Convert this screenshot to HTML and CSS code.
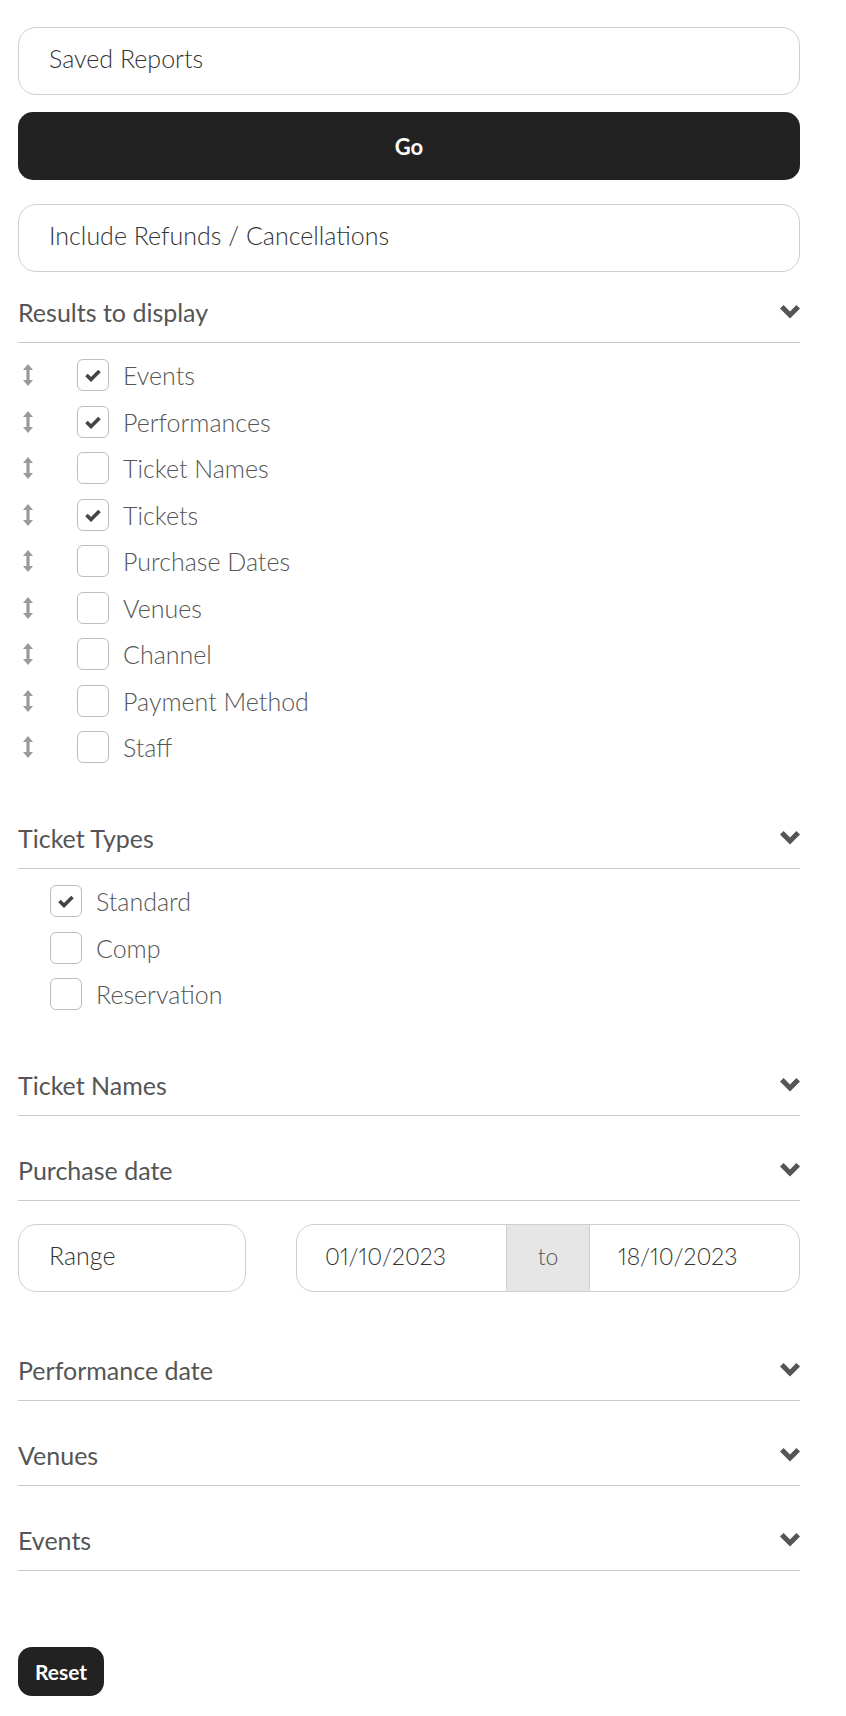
FILE: index.html
```html
<!DOCTYPE html>
<html lang="en">
<head>
    <meta charset="UTF-8">
    <meta name="viewport" content="width=device-width, initial-scale=1.0">
    <title>Report Filters</title>
    <link rel="stylesheet" href="styles.css">
</head>
<body>
    <div class="filters">
        <div class="field">Saved Reports</div>
        <button class="btn-go">Go</button>
        <div class="field field-gap">Include Refunds / Cancellations</div>

        <!-- Results to display -->
        <section class="panel">
            <div class="panel-head first">
                <h2>Results to display</h2>
                <svg class="chevron" viewBox="0 0 20 14"><path d="M0 3.6 L3.6 0 L10 6.4 L16.4 0 L20 3.6 L10 13.6 Z"/></svg>
            </div>
            <ul class="opt-list sortable">
                <li><svg class="drag" viewBox="0 0 10 22"><path d="M5 0 L10 6 L6.6 6 L6.6 16 L10 16 L5 22 L0 16 L3.4 16 L3.4 6 L0 6 Z"/></svg><span class="box on"><svg viewBox="0 0 18 14"><polyline points="2.5,7 7,11.5 15.5,3"/></svg></span>Events</li>
                <li><svg class="drag" viewBox="0 0 10 22"><path d="M5 0 L10 6 L6.6 6 L6.6 16 L10 16 L5 22 L0 16 L3.4 16 L3.4 6 L0 6 Z"/></svg><span class="box on"><svg viewBox="0 0 18 14"><polyline points="2.5,7 7,11.5 15.5,3"/></svg></span>Performances</li>
                <li><svg class="drag" viewBox="0 0 10 22"><path d="M5 0 L10 6 L6.6 6 L6.6 16 L10 16 L5 22 L0 16 L3.4 16 L3.4 6 L0 6 Z"/></svg><span class="box"></span>Ticket Names</li>
                <li><svg class="drag" viewBox="0 0 10 22"><path d="M5 0 L10 6 L6.6 6 L6.6 16 L10 16 L5 22 L0 16 L3.4 16 L3.4 6 L0 6 Z"/></svg><span class="box on"><svg viewBox="0 0 18 14"><polyline points="2.5,7 7,11.5 15.5,3"/></svg></span>Tickets</li>
                <li><svg class="drag" viewBox="0 0 10 22"><path d="M5 0 L10 6 L6.6 6 L6.6 16 L10 16 L5 22 L0 16 L3.4 16 L3.4 6 L0 6 Z"/></svg><span class="box"></span>Purchase Dates</li>
                <li><svg class="drag" viewBox="0 0 10 22"><path d="M5 0 L10 6 L6.6 6 L6.6 16 L10 16 L5 22 L0 16 L3.4 16 L3.4 6 L0 6 Z"/></svg><span class="box"></span>Venues</li>
                <li><svg class="drag" viewBox="0 0 10 22"><path d="M5 0 L10 6 L6.6 6 L6.6 16 L10 16 L5 22 L0 16 L3.4 16 L3.4 6 L0 6 Z"/></svg><span class="box"></span>Channel</li>
                <li><svg class="drag" viewBox="0 0 10 22"><path d="M5 0 L10 6 L6.6 6 L6.6 16 L10 16 L5 22 L0 16 L3.4 16 L3.4 6 L0 6 Z"/></svg><span class="box"></span>Payment Method</li>
                <li><svg class="drag" viewBox="0 0 10 22"><path d="M5 0 L10 6 L6.6 6 L6.6 16 L10 16 L5 22 L0 16 L3.4 16 L3.4 6 L0 6 Z"/></svg><span class="box"></span>Staff</li>
            </ul>
        </section>

        <!-- Ticket Types -->
        <section class="panel">
            <div class="panel-head">
                <h2>Ticket Types</h2>
                <svg class="chevron" viewBox="0 0 20 14"><path d="M0 3.6 L3.6 0 L10 6.4 L16.4 0 L20 3.6 L10 13.6 Z"/></svg>
            </div>
            <ul class="opt-list indented">
                <li><span class="box on"><svg viewBox="0 0 18 14"><polyline points="2.5,7 7,11.5 15.5,3"/></svg></span>Standard</li>
                <li><span class="box"></span>Comp</li>
                <li><span class="box"></span>Reservation</li>
            </ul>
        </section>

        <section class="panel">
            <div class="panel-head">
                <h2>Ticket Names</h2>
                <svg class="chevron" viewBox="0 0 20 14"><path d="M0 3.6 L3.6 0 L10 6.4 L16.4 0 L20 3.6 L10 13.6 Z"/></svg>
            </div>
        </section>

        <!-- Purchase date -->
        <section class="panel">
            <div class="panel-head">
                <h2>Purchase date</h2>
                <svg class="chevron" viewBox="0 0 20 14"><path d="M0 3.6 L3.6 0 L10 6.4 L16.4 0 L20 3.6 L10 13.6 Z"/></svg>
            </div>
            <div class="date-row">
                <div class="field">Range</div>
                <div class="date-group">
                    <div class="date-input">01/10/2023</div>
                    <div class="date-to">to</div>
                    <div class="date-input">18/10/2023</div>
                </div>
            </div>
        </section>

        <section class="panel">
            <div class="panel-head">
                <h2>Performance date</h2>
                <svg class="chevron" viewBox="0 0 20 14"><path d="M0 3.6 L3.6 0 L10 6.4 L16.4 0 L20 3.6 L10 13.6 Z"/></svg>
            </div>
        </section>

        <section class="panel">
            <div class="panel-head">
                <h2>Venues</h2>
                <svg class="chevron" viewBox="0 0 20 14"><path d="M0 3.6 L3.6 0 L10 6.4 L16.4 0 L20 3.6 L10 13.6 Z"/></svg>
            </div>
        </section>

        <section class="panel">
            <div class="panel-head">
                <h2>Events</h2>
                <svg class="chevron" viewBox="0 0 20 14"><path d="M0 3.6 L3.6 0 L10 6.4 L16.4 0 L20 3.6 L10 13.6 Z"/></svg>
            </div>
        </section>

        <button class="btn-reset">Reset</button>
    </div>
</body>
</html>
```

FILE: styles.css
```css
body {
    font-family: Lato, 'Open Sans', sans-serif;
    margin: 0;
    padding: 0;
    background: #fff;
    color: #333;
}
.filters {
    width: 782px;
    padding: 27px 0 0 18px;
}
.field {
    box-sizing: border-box;
    height: 68px;
    display: flex;
    align-items: center;
    padding: 0 30px 6px;
    border: 1px solid #cfcfcf;
    border-radius: 18px;
    font-size: 25px;
    font-weight: 300;
    color: #333;
}
.field-gap {
    margin-top: 24px;
}
.btn-go {
    display: block;
    width: 100%;
    height: 68px;
    margin-top: 17px;
    border: none;
    border-radius: 15px;
    background-color: #222;
    color: #fff;
    font-family: Lato, sans-serif;
    font-size: 22px;
    font-weight: bold;
    cursor: pointer;
}
.panel-head {
    box-sizing: border-box;
    display: flex;
    align-items: center;
    justify-content: space-between;
    height: 57px;
    padding-bottom: 5px;
    margin-top: 28px;
    border-bottom: 1px solid #c8c8c8;
}
.panel-head.first {
    margin-top: 14px;
}
.panel-head h2 {
    margin: 0;
    font-size: 25px;
    font-weight: normal;
    color: #555;
}
.chevron {
    width: 20px;
    height: 14px;
    fill: #555;
}
.opt-list {
    list-style: none;
    margin: 0;
    padding: 16px 0 21px;
    display: flex;
    flex-direction: column;
    gap: 14.5px;
}
.opt-list li {
    display: flex;
    align-items: center;
    height: 32px;
    font-size: 25px;
    font-weight: 300;
    color: #555;
}
.opt-list.indented {
    padding-left: 32px;
}
.drag {
    width: 10px;
    height: 22px;
    margin: 0 44px 0 5px;
    fill: #9a9a9a;
}
.box {
    box-sizing: border-box;
    width: 32px;
    height: 32px;
    margin-right: 14px;
    border: 1px solid #bdbdbd;
    border-radius: 6px;
    display: flex;
    align-items: center;
    justify-content: center;
}
.box svg {
    width: 18px;
    height: 14px;
    fill: none;
    stroke: #444;
    stroke-width: 3.6;
}
.date-row {
    display: grid;
    grid-template-columns: 228px 1fr;
    gap: 50px;
    padding: 23px 0 24px;
}
.date-group {
    display: flex;
    height: 68px;
    box-sizing: border-box;
    border: 1px solid #cfcfcf;
    border-radius: 18px;
    overflow: hidden;
    font-size: 23px;
    font-weight: 300;
    font-variant-numeric: proportional-nums;
    color: #333;
}
.date-input {
    flex: 1;
    display: flex;
    align-items: center;
    padding: 0 0 4px 28px;
}
.date-to {
    width: 82px;
    display: flex;
    align-items: center;
    justify-content: center;
    padding-bottom: 4px;
    background-color: #e6e6e6;
    border-left: 1px solid #cfcfcf;
    border-right: 1px solid #cfcfcf;
    color: #555;
}
.btn-reset {
    display: block;
    margin-top: 76px;
    width: 86px;
    height: 49px;
    border: none;
    border-radius: 14px;
    background-color: #222;
    color: #fff;
    font-family: Lato, sans-serif;
    font-size: 21px;
    font-weight: bold;
    cursor: pointer;
}
```
